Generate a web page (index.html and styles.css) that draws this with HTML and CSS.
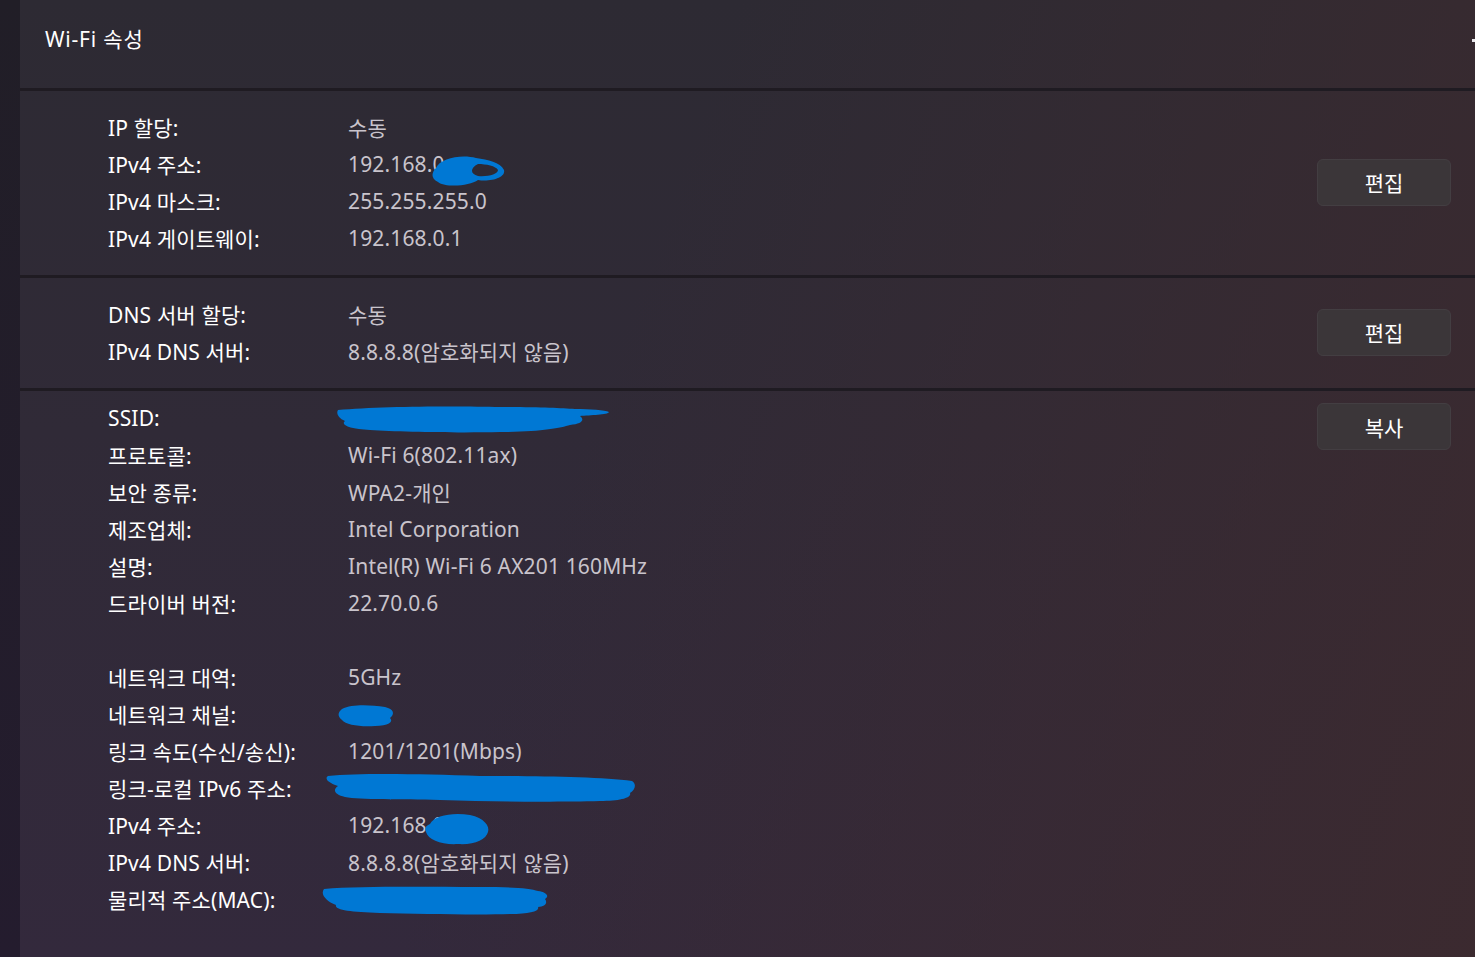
FILE: index.html
```html
<!DOCTYPE html>
<html>
<head>
    <title>Wi-Fi 속성</title>
    <link rel="stylesheet" href="styles.css">
</head>
<body>
<div class="sidebar"></div>
<div class="window">
    <div class="header">
        <h1>Wi-Fi 속성</h1>
        <span class="chevron"></span>
    </div>

    <div class="section centered">
        <div class="rows">
            <div class="row"><span class="label">IP 할당:</span><span class="value">수동</span></div>
            <div class="row"><span class="label">IPv4 주소:</span><span class="value">192.168.0.</span></div>
            <div class="row"><span class="label">IPv4 마스크:</span><span class="value">255.255.255.0</span></div>
            <div class="row"><span class="label">IPv4 게이트웨이:</span><span class="value">192.168.0.1</span></div>
        </div>
        <button class="button">편집</button>
    </div>

    <div class="section centered">
        <div class="rows">
            <div class="row"><span class="label">DNS 서버 할당:</span><span class="value">수동</span></div>
            <div class="row"><span class="label">IPv4 DNS 서버:</span><span class="value">8.8.8.8(암호화되지 않음)</span></div>
        </div>
        <button class="button">편집</button>
    </div>

    <div class="section top">
        <div class="rows">
            <div class="row"><span class="label">SSID:</span><span class="value"></span></div>
            <div class="row"><span class="label">프로토콜:</span><span class="value">Wi-Fi 6(802.11ax)</span></div>
            <div class="row"><span class="label">보안 종류:</span><span class="value">WPA2-개인</span></div>
            <div class="row"><span class="label">제조업체:</span><span class="value">Intel Corporation</span></div>
            <div class="row"><span class="label">설명:</span><span class="value">Intel(R) Wi-Fi 6 AX201 160MHz</span></div>
            <div class="row"><span class="label">드라이버 버전:</span><span class="value">22.70.0.6</span></div>
            <div class="row"></div>
            <div class="row"><span class="label">네트워크 대역:</span><span class="value">5GHz</span></div>
            <div class="row"><span class="label">네트워크 채널:</span><span class="value"></span></div>
            <div class="row"><span class="label">링크 속도(수신/송신):</span><span class="value">1201/1201(Mbps)</span></div>
            <div class="row"><span class="label">링크-로컬 IPv6 주소:</span><span class="value"></span></div>
            <div class="row"><span class="label">IPv4 주소:</span><span class="value">192.168.0.</span></div>
            <div class="row"><span class="label">IPv4 DNS 서버:</span><span class="value">8.8.8.8(암호화되지 않음)</span></div>
            <div class="row"><span class="label">물리적 주소(MAC):</span><span class="value"></span></div>
        </div>
        <button class="button">복사</button>
    </div>
</div>

<!-- hand-drawn redaction marks over the private values -->
<svg class="redactions" width="1475" height="957" viewBox="0 0 1475 957">
    <g fill="#0078d4">
        <path d="M436 168 C440 158 462 154 476 158 C488 160 500 162 504 170 C506 178 490 182 478 180 C470 186 446 188 438 182 C430 178 432 172 436 168 Z M478 164 C470 168 470 174 478 176 C488 177 498 174 498 170 C496 166 486 164 478 164 Z"/>
        <path d="M338 410 C380 406 460 406 500 407 C540 407 560 408 575 409 C590 409 605 410 609 412 C608 415 590 415 580 416 C585 420 582 424 570 425 C560 428 540 432 500 432 C460 433 400 432 370 430 C350 429 340 425 345 421 C338 418 336 413 338 410 Z"/>
        <path d="M342 709 C352 704 370 705 385 707 C394 709 395 714 390 718 C394 722 388 726 375 726 C360 727 346 725 342 720 C337 716 338 712 342 709 Z"/>
        <path d="M328 776 C360 773 420 774 480 776 C540 776 600 777 632 781 C637 784 635 790 630 793 C632 798 620 801 600 801 C560 802 500 802 440 800 C400 799 360 800 345 797 C335 795 332 790 338 786 C326 782 325 778 328 776 Z"/>
        <path d="M430 824 C434 815 454 812 470 815 C484 818 490 826 488 832 C486 840 474 845 458 844 C442 845 428 840 426 832 C424 828 426 826 430 824 Z"/>
        <path d="M324 889 C360 886 420 887 480 887 C510 887 530 888 538 891 C546 892 550 896 545 899 C548 903 545 907 538 907 C540 911 530 914 510 914 C480 915 420 914 380 913 C350 912 334 910 336 905 C326 901 320 894 324 889 Z"/>
    </g>
</svg>
</body>
</html>
```

FILE: styles.css
```css
body {
    margin: 0;
    background-color: #211c29;
    font-family: "Noto Sans", "Noto Sans CJK KR", sans-serif;
    color: #ffffff;
    display: flex;
    min-height: 957px;
    overflow: hidden;
}

.sidebar {
    width: 20px;
    flex-shrink: 0;
    background: linear-gradient(180deg, #211e27 0%, #241c2e 100%);
}

.window {
    flex: 1;
    min-height: 957px;
    background:
        linear-gradient(110deg, rgba(50, 41, 60, 0) 40%, rgba(60, 42, 46, 0.9) 100%),
        linear-gradient(180deg, #2d2a33 0%, #302a37 45%, #33293c 100%);
}

.header {
    height: 88px;
    display: flex;
    align-items: center;
    justify-content: space-between;
    padding-left: 25px;
    position: relative;
}

.header h1 {
    margin: 0 0 12px 0;
    font-size: 21px;
    font-weight: normal;
    letter-spacing: 0.8px;
    color: #ffffff;
}

.chevron {
    position: absolute;
    right: 0;
    top: 39px;
    width: 3px;
    height: 3px;
    background-color: #e8e6ea;
}

.section {
    border-top: 3px solid #1f1b22;
    display: flex;
    justify-content: space-between;
    padding-left: 88px;
    padding-right: 24px;
}

.section.centered {
    align-items: center;
    padding-top: 17px;
    padding-bottom: 19px;
}

.section.top {
    align-items: flex-start;
    padding-top: 8px;
    padding-bottom: 40px;
}

.section.top .button {
    margin-top: 4px;
}

.rows {
    display: flex;
    flex-direction: column;
}

.row {
    height: 37px;
    display: flex;
    align-items: center;
    font-size: 21px;
    letter-spacing: 0.15px;
}

.label {
    width: 240px;
    color: #ffffff;
}

.value {
    color: #c9c4cc;
}

.button {
    width: 134px;
    height: 47px;
    font-family: inherit;
    font-size: 21px;
    color: #ffffff;
    background-color: #3b3639;
    border: 1px solid #433e42;
    border-radius: 6px;
    cursor: pointer;
}

.redactions {
    position: absolute;
    left: 0;
    top: 0;
    pointer-events: none;
}
```
